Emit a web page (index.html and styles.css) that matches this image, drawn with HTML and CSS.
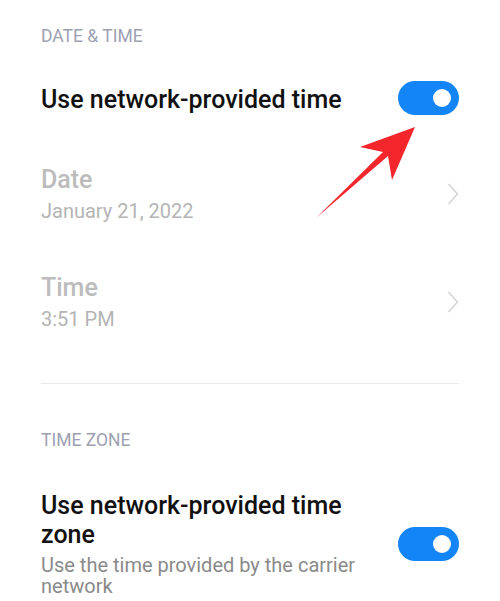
FILE: index.html
```html
<!DOCTYPE html>
<html lang="en">
<head>
  <meta charset="UTF-8">
  <meta name="viewport" content="width=device-width, initial-scale=1.0">
  <title>Date &amp; time</title>
  <link rel="stylesheet" href="styles.css">
</head>
<body>

  <div class="page">
    <!-- 날짜 & 시간 -->
    <div class="section-title">DATE &amp; TIME</div>

    <div class="row row-switch">
      <div class="row-text">
        <div class="row-title">Use network-provided time</div>
      </div>
      <div class="switch on"><span class="knob"></span></div>
    </div>

    <div class="row row-link disabled">
      <div class="row-text">
        <div class="row-title">Date</div>
        <div class="row-sub">January 21, 2022</div>
      </div>
      <svg class="chevron" width="12" height="22" viewBox="0 0 12 22"><path d="M1.5 1 L10.5 11 L1.5 21" fill="none" stroke="#d6d6d6" stroke-width="1.6"/></svg>
    </div>

    <div class="row row-link disabled">
      <div class="row-text">
        <div class="row-title">Time</div>
        <div class="row-sub">3:51 PM</div>
      </div>
      <svg class="chevron" width="12" height="22" viewBox="0 0 12 22"><path d="M1.5 1 L10.5 11 L1.5 21" fill="none" stroke="#d6d6d6" stroke-width="1.6"/></svg>
    </div>

    <hr class="divider">

    <!-- 시간대 -->
    <div class="section-title after-divider">TIME ZONE</div>

    <div class="row row-switch tall">
      <div class="row-text">
        <div class="row-title">Use network-provided time zone</div>
        <div class="row-sub">Use the time provided by the carrier network</div>
      </div>
      <div class="switch on"><span class="knob"></span></div>
    </div>
  </div>

  <!-- 빨간 화살표 -->
  <svg class="pointer" width="500" height="601" viewBox="0 0 500 601">
    <path d="M316 218 L388 156 L392 180 L415 127 L360 147 L383 152 Z" fill="#f3262b"/>
  </svg>

</body>
</html>
```

FILE: styles.css
```css
body {
  font-family: Roboto, 'Noto Sans', sans-serif;
  margin: 0;
  padding: 0;
  background-color: #ffffff;
  color: #111;
  position: relative;
  overflow: hidden;
  height: 601px;
}

.page {
  padding: 0 41px;
}

.section-title {
  font-size: 17.5px;
  color: #9d9fb3;
  line-height: 20px;
  padding-top: 26px;
}

.section-title.after-divider {
  padding-top: 46px;
}

.row {
  display: flex;
  justify-content: space-between;
  align-items: center;
}

.row-switch {
  padding-top: 35px;
  padding-bottom: 25px;
}

.row-switch .row-text {
  padding-top: 4px;
}

.row-title {
  font-size: 25px;
  font-weight: 500;
  line-height: 30px;
  color: #111;
}

.row-sub {
  font-size: 20px;
  color: #8a8a8a;
  line-height: 24px;
  margin-top: 3.5px;
}

.row-link {
  height: 108px;
}

.disabled .row-title {
  color: #bcbcbc;
}

.disabled .row-sub {
  color: #b4b4b4;
}

.divider {
  border: none;
  border-top: 1px solid #ebebeb;
  margin: 27px 0 0;
}

/* 두 줄짜리 항목 */
.tall {
  padding-top: 41px;
  padding-bottom: 0;
}

.tall .row-text {
  max-width: 330px;
  padding-top: 0;
}

.tall .row-title {
  line-height: 29px;
}

.tall .row-sub {
  line-height: 21px;
  margin-top: 5.7px;
}

/* 토글 스위치 */
.switch {
  width: 61px;
  height: 34px;
  border-radius: 17px;
  background-color: #1485f7;
  position: relative;
  flex-shrink: 0;
}

.switch .knob {
  position: absolute;
  top: 8px;
  right: 8px;
  width: 18px;
  height: 18px;
  border-radius: 50%;
  background-color: #fff;
}

.pointer {
  position: absolute;
  top: 0;
  left: 0;
}
```
